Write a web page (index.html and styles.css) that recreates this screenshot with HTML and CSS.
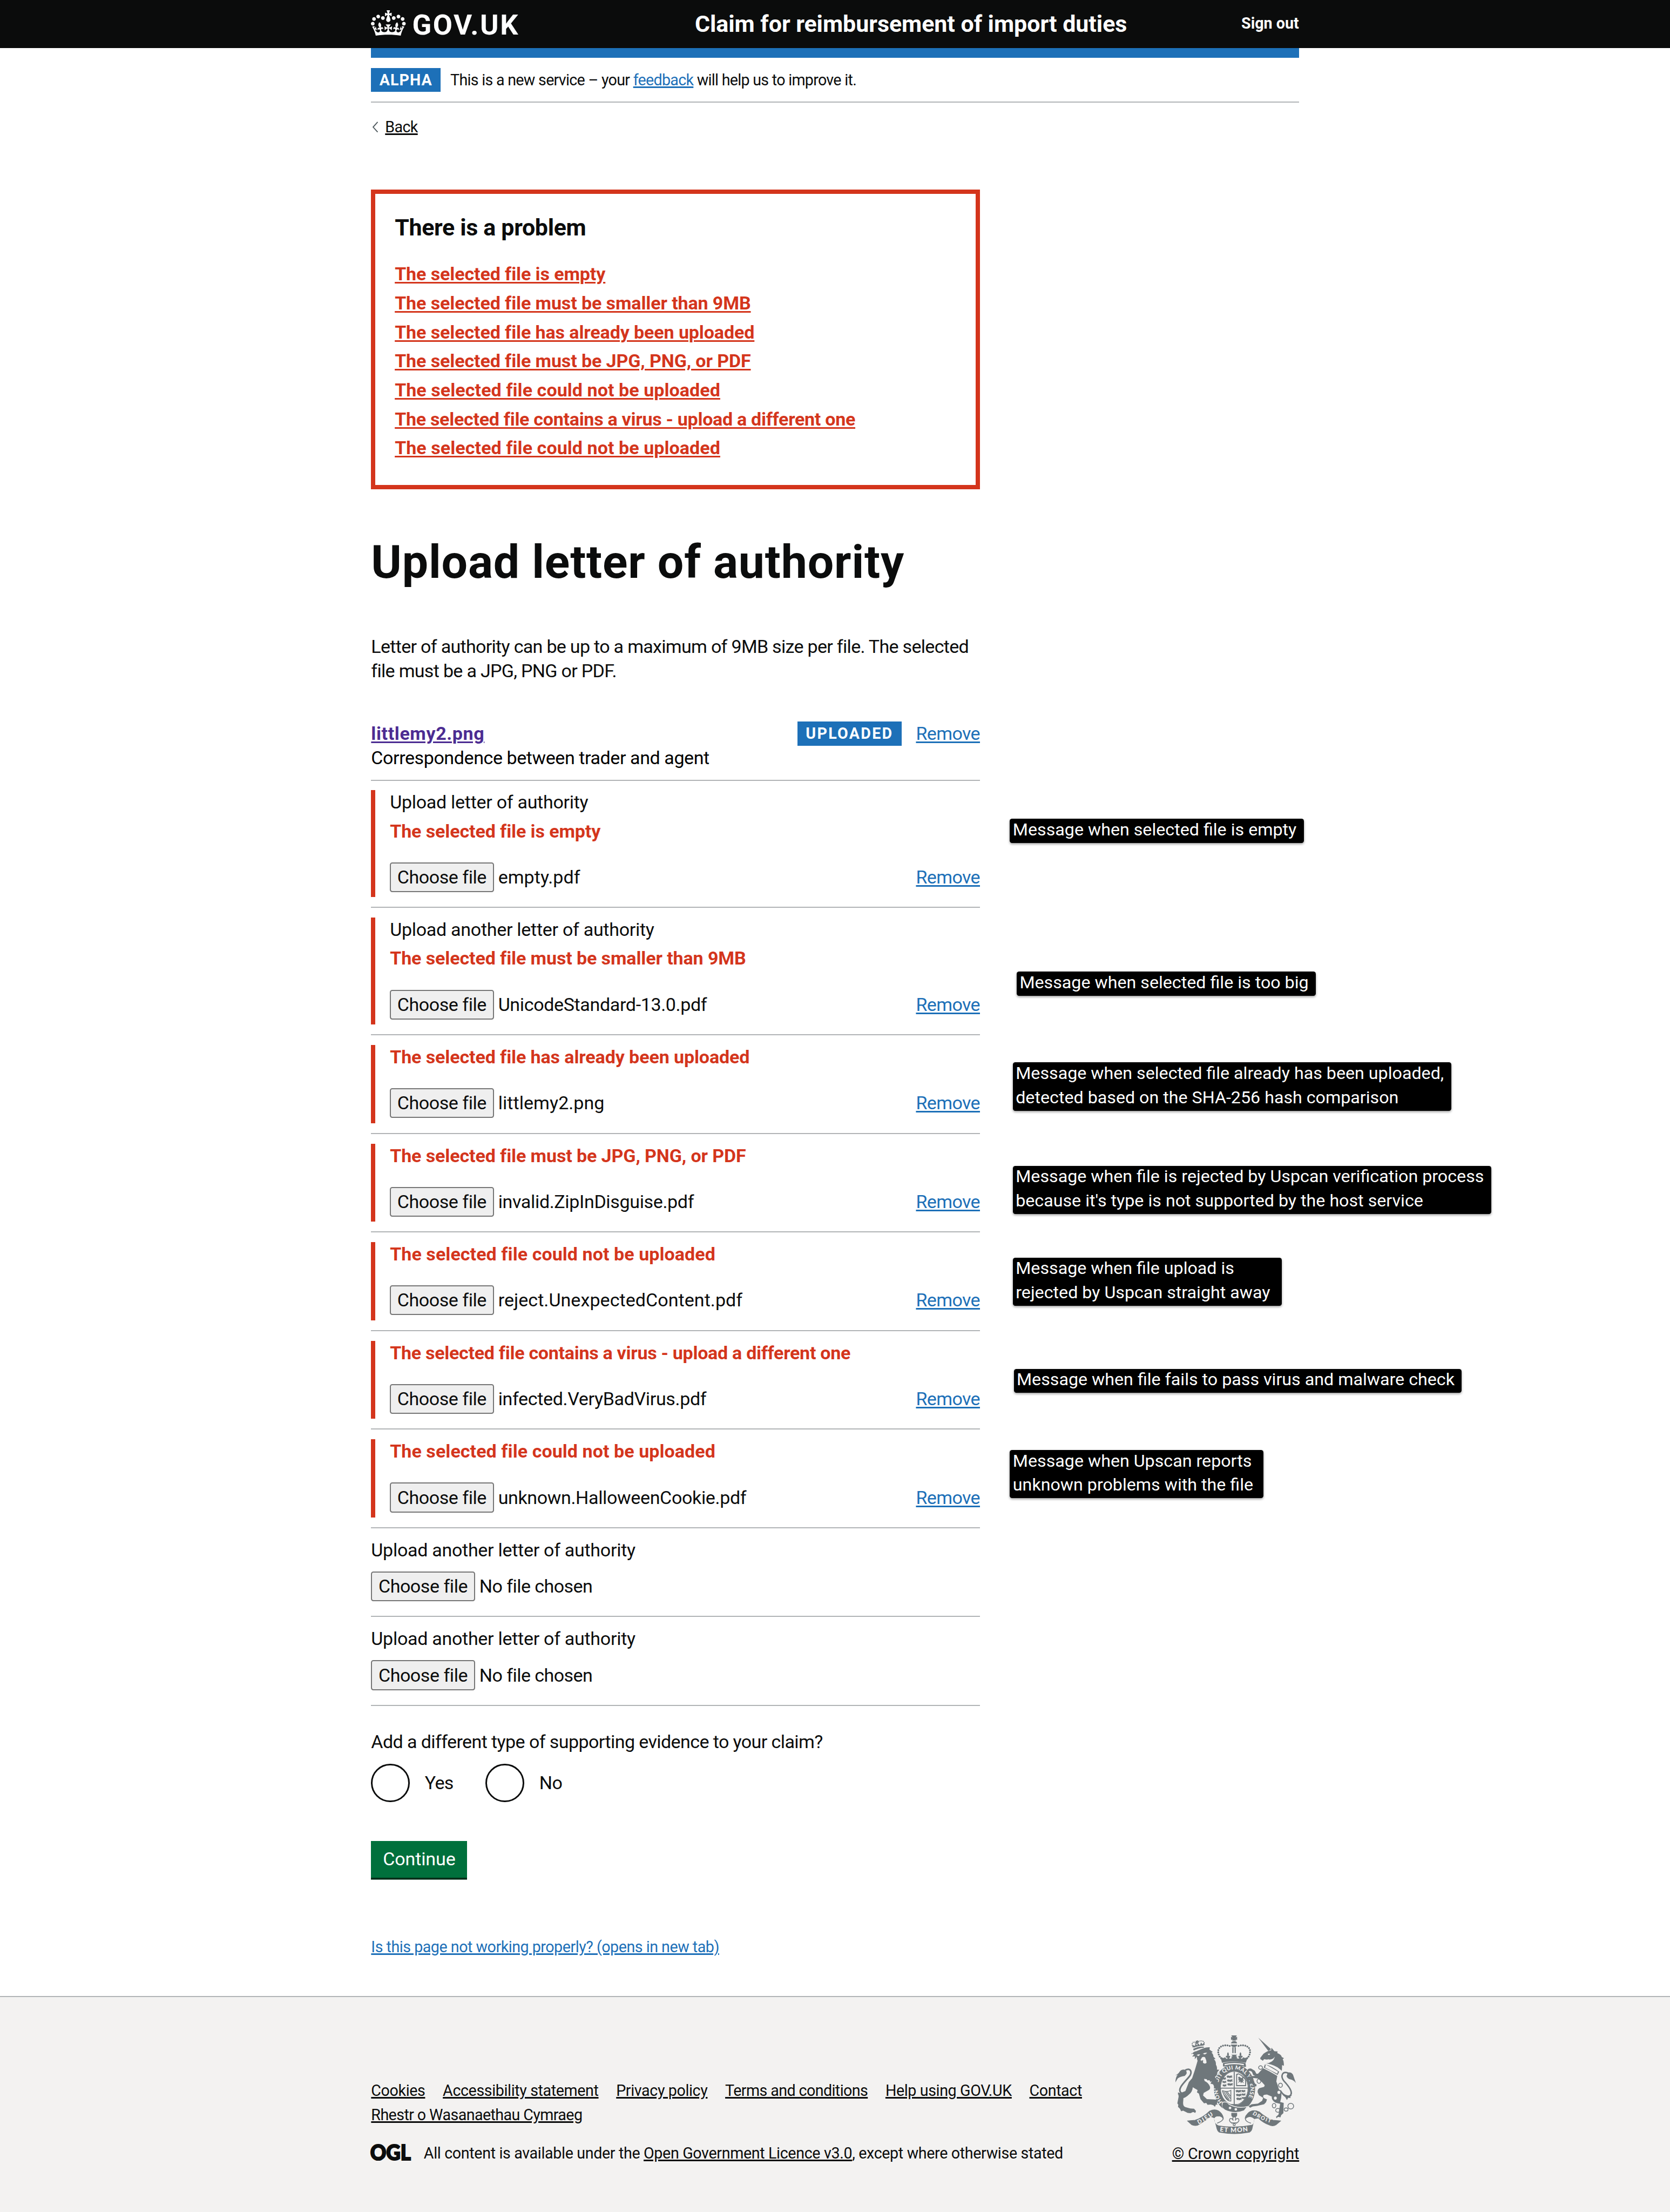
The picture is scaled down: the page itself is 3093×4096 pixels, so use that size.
FILE: index.html
```
<!DOCTYPE html>
<html lang="en">
<head>
<meta charset="utf-8">
<title>Upload letter of authority - Claim for reimbursement of import duties - GOV.UK</title>
<link rel="stylesheet" href="styles.css">
</head>
<body>
<header class="header">
  <div class="container header-row">
    <a class="logo">
      <svg class="logo-crown" viewBox="0 0 132 97" preserveAspectRatio="none" fill="currentColor"><path fill-rule="evenodd" d="M25 30.2c3.5 1.5 7.7-.2 9.1-3.7 1.5-3.6-.2-7.8-3.9-9.2-3.6-1.4-7.6.3-9.1 3.9-1.4 3.5.3 7.5 3.9 9zM9 39.5c3.6 1.5 7.8-.2 9.2-3.7 1.5-3.6-.2-7.8-3.9-9.1-3.6-1.5-7.6.2-9.1 3.8-1.4 3.5.3 7.5 3.8 9zM4.4 57.2c3.5 1.5 7.7-.2 9.1-3.8 1.5-3.6-.2-7.7-3.9-9.1-3.5-1.5-7.6.3-9.1 3.8-1.4 3.5.3 7.6 3.9 9.1zm38.3-21.4c3.5 1.5 7.7-.2 9.1-3.8 1.5-3.6-.2-7.7-3.9-9.1-3.6-1.5-7.6.3-9.1 3.8-1.3 3.6.4 7.7 3.9 9.1zm64.4-5.6c-3.6 1.5-7.8-.2-9.1-3.7-1.5-3.6.2-7.8 3.8-9.2 3.6-1.4 7.7.3 9.2 3.9 1.3 3.5-.4 7.5-3.9 9zm15.9 9.3c-3.6 1.5-7.7-.2-9.1-3.7-1.5-3.6.2-7.8 3.7-9.1 3.6-1.5 7.7.2 9.2 3.8 1.5 3.5-.3 7.5-3.8 9zm4.7 17.7c-3.6 1.5-7.8-.2-9.2-3.8-1.5-3.6.2-7.7 3.9-9.1 3.6-1.5 7.7.3 9.2 3.8 1.3 3.5-.4 7.6-3.9 9.1zM89.3 35.8c-3.6 1.5-7.8-.2-9.2-3.8-1.4-3.6.2-7.7 3.9-9.1 3.6-1.5 7.7.3 9.2 3.8 1.4 3.6-.3 7.7-3.9 9.1zM69.7 17.7l8.9 4.7V9.3l-8.9 2.8c-.2-.3-.5-.6-.9-.9L72.4 0H59.6l3.5 11.2c-.3.3-.6.5-.9.9l-8.8-2.8v13.1l8.8-4.7c.3.3.6.7.9.9l-5 15.4v.1c-.2.8-.4 1.6-.4 2.4 0 4.1 3.1 7.5 7 8.1h.2c.3 0 .7.1 1 .1.4 0 .7 0 1-.1h.2c4-.6 7.1-4.1 7.1-8.1 0-.8-.1-1.7-.4-2.4V34l-5.1-15.4c.4-.2.7-.6 1-.9zM66 92.8c16.9 0 32.8 1.1 47.1 3.2 4-16.9 8.9-26.7 14-33.5l-9.6-3.4c1 4.9 1.1 7.2 0 10.2-1.5-1.4-3-4.3-4.2-8.7L108.6 76c2.8-2 5-3.2 7.5-3.3-4.4 9.4-10 11.9-13.6 11.2-4.3-.8-6.3-4.6-5.6-7.9 1-4.7 5.7-5.9 8-.5 4.3-8.7-3-11.4-7.6-8.8 7.1-7.2 7.9-13.5 2.1-21.1-8 6.1-8.1 12.3-4.5 20.8-4.7-5.4-12.1-2.5-9.5 6.2 3.4-5.2 7.9-2 7.2 3.1-.6 4.3-6.4 7.8-13.5 7.2-10.3-.9-10.9-8-11.2-13.8 2.5-.5 7.1 1.8 11 7.3L80.2 60c-4.1 4.4-8 5.3-12.3 5.4 1.4-4.4 8-11.6 8-11.6H55.5s6.4 7.2 7.9 11.6c-4.2-.1-8-1-12.3-5.4l1.4 16.4c3.9-5.5 8.5-7.7 10.9-7.3-.3 5.8-.9 12.8-11.1 13.8-7.2.6-12.9-2.9-13.5-7.2-.7-5 3.8-8.3 7.1-3.1 2.7-8.7-4.6-11.6-9.4-6.2 3.7-8.5 3.6-14.7-4.6-20.8-5.8 7.6-5 13.9 2.2 21.1-4.7-2.6-11.9.1-7.7 8.8 2.3-5.5 7.1-4.2 8.1.5.7 3.3-1.3 7.1-5.7 7.9-3.5.7-9-1.8-13.5-11.2 2.5.1 4.7 1.3 7.5 3.3l-4.7-15.4c-1.2 4.4-2.7 7.2-4.3 8.7-1.1-3-.9-5.3 0-10.2l-9.5 3.4c5 6.9 9.9 16.7 14 33.5 14.8-2.1 30.8-3.2 47.7-3.2z"/></svg>
      <span class="logo-text">GOV.UK</span>
    </a>
    <a class="service-name">Claim for reimbursement of import duties</a>
    <a class="sign-out">Sign out</a>
  </div>
</header>

<div class="container">
  <div class="header-bar"></div>
  <div class="phase-banner">
    <strong class="tag tag-phase">ALPHA</strong>
    <span class="phase-text">This is a new service – your <a class="link">feedback</a> will help us to improve it.</span>
  </div>
  <div class="back">
    <svg class="back-arrow" viewBox="0 0 12 22" fill="none" stroke="#505a5f" stroke-width="2"><path d="M11 1L2 11l9 10"/></svg>
    <a class="link link-text">Back</a>
  </div>

  <main class="main">
    <section class="error-summary">
      <h2 class="error-title">There is a problem</h2>
      <ul class="error-list">
        <li><a class="link">The selected file is empty</a></li>
        <li><a class="link">The selected file must be smaller than 9MB</a></li>
        <li><a class="link">The selected file has already been uploaded</a></li>
        <li><a class="link">The selected file must be JPG, PNG, or PDF</a></li>
        <li class="loose"><a class="link">The selected file could not be uploaded</a></li>
        <li class="tight"><a class="link">The selected file contains a virus - upload a different one</a></li>
        <li class="loose"><a class="link">The selected file could not be uploaded</a></li>
      </ul>
    </section>

    <h1 class="title">Upload letter of authority</h1>
    <p class="intro">Letter of authority can be up to a maximum of 9MB size per file. The selected<br>file must be a JPG, PNG or PDF.</p>

    <div class="uploaded">
      <div class="uploaded-row">
        <a class="link link-visited">littlemy2.png</a>
        <strong class="tag tag-uploaded">UPLOADED</strong>
        <a class="link">Remove</a>
      </div>
      <div class="doc-type">Correspondence between trader and agent</div>
    </div>

    <div class="upload upload-tall"><div class="group">
      <div class="label">Upload letter of authority</div>
      <div class="error">The selected file is empty</div>
      <div class="file-row"><span class="file-button">Choose file</span><span class="file-name loose">empty.pdf</span><a class="link">Remove</a></div>
    </div></div>
    <div class="upload upload-tall"><div class="group">
      <div class="label">Upload another letter of authority</div>
      <div class="error">The selected file must be smaller than 9MB</div>
      <div class="file-row"><span class="file-button">Choose file</span><span class="file-name">UnicodeStandard-13.0.pdf</span><a class="link">Remove</a></div>
    </div></div>
    <div class="upload"><div class="group">
      <div class="error">The selected file has already been uploaded</div>
      <div class="file-row"><span class="file-button">Choose file</span><span class="file-name loose">littlemy2.png</span><a class="link">Remove</a></div>
    </div></div>
    <div class="upload"><div class="group">
      <div class="error">The selected file must be JPG, PNG, or PDF</div>
      <div class="file-row"><span class="file-button">Choose file</span><span class="file-name">invalid.ZipInDisguise.pdf</span><a class="link">Remove</a></div>
    </div></div>
    <div class="upload"><div class="group">
      <div class="error loose">The selected file could not be uploaded</div>
      <div class="file-row"><span class="file-button">Choose file</span><span class="file-name loose">reject.UnexpectedContent.pdf</span><a class="link">Remove</a></div>
    </div></div>
    <div class="upload"><div class="group">
      <div class="error tight">The selected file contains a virus - upload a different one</div>
      <div class="file-row"><span class="file-button">Choose file</span><span class="file-name">infected.VeryBadVirus.pdf</span><a class="link">Remove</a></div>
    </div></div>
    <div class="upload"><div class="group">
      <div class="error loose">The selected file could not be uploaded</div>
      <div class="file-row"><span class="file-button">Choose file</span><span class="file-name">unknown.HalloweenCookie.pdf</span><a class="link">Remove</a></div>
    </div></div>
    <div class="upload upload-empty">
      <div class="label">Upload another letter of authority</div>
      <div class="file-row"><span class="file-button">Choose file</span><span class="file-name file-none">No file chosen</span></div>
    </div>
    <div class="upload upload-empty">
      <div class="label">Upload another letter of authority</div>
      <div class="file-row"><span class="file-button">Choose file</span><span class="file-name file-none">No file chosen</span></div>
    </div>

    <div class="question">Add a different type of supporting evidence to your claim?</div>
    <div class="radios">
      <label class="radio"><span class="radio-dot"></span>Yes</label>
      <label class="radio"><span class="radio-dot"></span>No</label>
    </div>
    <button class="continue">Continue</button>
    <div class="help"><a class="link">Is this page not working properly? (opens in new tab)</a></div>
  </main>
</div>

<div class="note note-1"><p>Message when selected file is empty</p></div>
<div class="note note-2"><p>Message when selected file is too big</p></div>
<div class="note note-3"><p>Message when selected file already has been uploaded,<br>detected based on the SHA-256 hash comparison</p></div>
<div class="note note-4"><p>Message when file is rejected by Uspcan verification process<br>because it's type is not supported by the host service</p></div>
<div class="note note-5"><p>Message when file upload is<br>rejected by Uspcan straight away</p></div>
<div class="note note-6"><p>Message when file fails to pass virus and malware check</p></div>
<div class="note note-7"><p>Message when Upscan reports<br>unknown problems with the file</p></div>

<footer class="footer">
  <div class="container footer-row">
    <div class="footer-meta">
      <ul class="footer-links">
        <li><a class="link link-text">Cookies</a></li>
        <li><a class="link link-text">Accessibility statement</a></li>
        <li><a class="link link-text">Privacy policy</a></li>
        <li class="footer-tight"><a class="link link-text">Terms and conditions</a></li>
        <li><a class="link link-text">Help using GOV.UK</a></li>
        <li><a class="link link-text">Contact</a></li>
        <li class="footer-tight"><a class="link link-text">Rhestr o Wasanaethau Cymraeg</a></li>
      </ul>
      <div class="licence">
        <svg class="ogl" viewBox="0 0 82 34" overflow="visible"><text x="-1.5" y="33" font-size="45" textLength="84" lengthAdjust="spacingAndGlyphs">OGL</text></svg>
        <span>All content is available under the <a class="link link-text">Open Government Licence v3.0</a>, except where otherwise stated</span>
      </div>
    </div>
    <div class="crest-block">
      <svg class="crest" viewBox="156 90 752 613" fill="#6f777b" stroke="none">
        <defs>
          <path id="garter" d="M450 504A102 118 0 1 1 598 496"/>
          <path id="dieu" d="M300 643Q352 616 398 582"/>
          <path id="mon" d="M432 687Q522 700 614 684"/>
          <path id="droit" d="M634 580Q690 618 758 637"/>
          <g id="lions"><path d="M0 6q10-8 18-2l14-3 6 5-7 4 8 7-12-3-8 5-3-6-9 4zM2 30q10-8 18-2l14-3 6 5-7 4 8 7-12-3-8 5-3-6-9 4zM4 54q10-8 18-2l14-3 6 5-7 4 4 7-10-3-8 5-3-6-7 4z"/></g>
        </defs>
        <!-- imperial crown -->
        <path d="M504 90h34l-7 12 9-4v20l-9-4 4 8h-28l5-8-10 4V98l9 4zM502 139q3-14 20-15 16 1 18 15zM501 147h40q-2 15-20 16-17-1-20-16z"/>
        <path d="M510 163h8v37h-8zM524 163h8v37h-8z"/>
        <g fill="none" stroke="#6f777b" stroke-width="12" stroke-linecap="round" stroke-dasharray="0 14"><path d="M494 155C460 144 416 158 423 198Q426 220 444 236"/><path d="M549 155C583 144 627 158 620 198Q617 220 599 236"/></g>
        <path d="M436 222q16 12 24 6 6-6 10 4 6 8 12-2-14-2-12-12 6-4 10 0-6-14 3-24 9 10 4 24 6-4 10 2 0 10-8 12 10 6 19-4l-6-4 10-6-8-8h36l-8 8 10 6-6 4q9 10 19 4-8-2-8-12 4-6 10-2-5-14 4-24 9 10 3 24 4-4 10 0 2 10-12 12 6 10 12 2 4-10 10-4 8 6 24-6l-14 38q-74-16-148 0z"/>
        <path d="M452 262q70-18 140 0l4 22q-10 4-14 0-60-18-120 0l-10-2z"/>
        <path d="M462 268q60-14 120 0v8q-60-14-120 0z" fill="#f3f2f1"/>
        <!-- garter and shield -->
        <path fill-rule="evenodd" d="M522 272C596 272 652 338 652 420S596 568 522 568 396 502 396 420 448 272 522 272zM522 312C474 312 436 360 436 416S474 526 522 526 610 474 610 416 570 312 522 312z"/>
        <ellipse cx="522" cy="418" rx="86" ry="104" fill="none" stroke="#6f777b" stroke-width="4"/>
        <path d="M519 316h6v204h-6zM436 415h172v6H436zM497 517h50l-25 14z"/>
        <use href="#lions" x="474" y="338"/><use href="#lions" transform="translate(446 350) scale(.7 .9)"/>
        <use href="#lions" x="530" y="428"/><use href="#lions" transform="translate(566 428) scale(.7 .9)"/>
        <path d="M534 330l14-4q30 14 48 40v40h-62zm6 7v62h50v-32q-16-22-42-35z" fill-rule="evenodd"/>
        <path d="M546 352q8-10 14 0l10 4 4-10 8 6-6 8 8 12-10-2 8 18-12-8-6 8-4-12-14 10 8-16-8-2 4-6z"/>
        <g fill="none" stroke="#6f777b" stroke-width="5"><path d="M449 434q30 10 52-2v66q-30 4-52-62zM458 442l34 50M468 440l30 42M478 440l20 28M458 458l30 38"/></g>
        <g class="crest-motto" fill="#f3f2f1" font-size="34"><text><textPath href="#garter" textLength="496">HONI SOIT QUI MAL Y PENSE</textPath></text></g>
        <path d="M448 508q22-12 40 10 56 30 116 14l-20 26q-60 24-120-4-20-12-16-46z" stroke="#f3f2f1" stroke-width="5"/>
        <circle cx="468" cy="528" r="17" fill="none" stroke="#6f777b" stroke-width="7"/><circle cx="496" cy="541" r="8" fill="#f3f2f1"/><circle cx="532" cy="550" r="8" fill="#f3f2f1"/>
        <!-- lion -->
        <g><path d="M258 148l12 18q20-10 62-13l6-22-14 14-8-12-8 18-12-14-4 16-12-14-2 16z"/><path d="M282 124l16-4-2 10 8 2-10 6-2 8-8-6-8-2 8-6z"/>
        <g fill="none" stroke="#6f777b" stroke-width="7" stroke-linecap="round" stroke-dasharray="0 10"><path d="M264 160C252 130 272 128 286 134M300 128C320 118 342 126 334 150"/></g>
        <path d="M266 174q30-16 66-14l2 6q-34 2-64 18z"/>
        <path d="M256 208q12-18 30-20l42-18q22-8 42-6l-2 14 20 14q-4 4-8 4 14 12 12 26l14 14-10 2q14 14 12 34 10 14 6 30l16 2q-16 12-14 28-4 10-14 16 6 12 16 24l12 30 12 22-10 4-6-12 2 18-8-2-4-10-4 10-8-12 6-10-12-2-8-14-16-4 8-14-10 2-4-10-12 2-6-8-16-2 4 14q20 10 28 24 12 20 0 30l-34 20-4 16 24 22 40 2 18 2 10 10-6 12 4 10-10-2-6 14-10-10-16-4-20 2-8-12-14 2-22-26-10-34-12-8 4-14-30-18q-2 28-24 46-18 18-34 22l-2 26q-2 24 14 30l30 8 24 2 12 14-4 12-14-6-16 8-18-2-28-14-12 4-8-16-12-12 2-12-6-10 8-42q-4-20 8-20l34-14 22-56 20-24 18-54 16-54q-6-14-4-26l-14 16 2-18-18 2 12-14-16-8z"/>
        <path fill="#f3f2f1" d="M288 212q12-6 22-4l-10 10zM326 204q14-8 28-6l-14 10zM322 226q10-6 18 0 10 18 10 34-10 10-22 0-2-8 2-14l-10-2-2 6-6-8z"/>
        <g fill="none" stroke="#6f777b" stroke-width="10"><path d="M218 306C250 288 264 318 242 346 216 378 168 420 188 444 200 458 220 452 236 440L254 412"/></g><path d="M218 304q18 20-4 38-28 4-44 16l-14 24q0-30 14-48-10 4-14 4 18-8 26-22 12-18 36-12zM172 444q20 8 42 4 20-4 24-14l-16 26-18 14-4-8-24 6 8-10-12-4z"/></g>
        <!-- unicorn -->
        <path d="M672 104l80 72-18 10z"/>
        <path d="M684 230l20-26q12-10 30-18l18-4 2-16 18 22 20 2-2 10q26 10 28 24l14 8-8 6q10 20 6 42l-10-6q0 20-2 36l-14-12q-20-20-84-36l4-12 18-12-18 2-16-2-8 10-10-8q-6 0-6-10z"/>
        <path d="M730 206q10-6 16 0l-8 6zM706 238q6 10 22 4 40-2 46-20-4 36-54 42z" fill="#f3f2f1"/>
        <path d="M714 268q50 18 88 48l-10 20q-40-26-86-46zl4 8-4 14 76 38 4-14z" fill-rule="evenodd"/>
        <path d="M702 294q42 20 88 48l-6 34q10 24 16 48 18 12 16 34 0 24-8 46l22 6-2 64-14 12-4 14-16-4-8 10-4-10 16-14 6-42 4-24-30-8q-26-18-22-38l-30-12q-20 0-24 8 0 12 10 16l14 6-6 18-12 12-44 10-26 4-18 8-8-10 18-12 40-4 26-18 6-18-26-16-8-18q-2-18 10-26l30-8 4-10-18-20-24-22-16-2-16-2 2 16 12 20 10 6-4 12-12-4-26-26-8-24-6 6-6-6q6-10 16-10l36-2-12-6-8-20-12-6-12 4-4-8q4-12 24-10l22 14 10 18h10z"/>
        <g fill="none" stroke="#6f777b" stroke-width="9"><path d="M858 324C820 310 808 344 832 374 860 404 892 444 870 464 856 476 838 472 826 456L808 432"/></g><path d="M852 322q24-8 36 12l8 24 10 28q-14-18-34-22-22-6-24-22 6-8 4-20zM826 448q20 22 56 14l-12 10 4 8-16-2-8 14-8-14z"/>
        <g fill="none" stroke="#6f777b" stroke-width="5"><ellipse cx="686" cy="290" rx="12" ry="11"/><ellipse cx="676" cy="374" rx="12" ry="14"/><ellipse cx="810" cy="400" rx="12" ry="13"/><ellipse cx="770" cy="527" rx="11" ry="14"/><ellipse cx="794" cy="556" rx="14" ry="12"/><ellipse cx="845" cy="551" rx="12" ry="10"/><circle cx="874" cy="530" r="18"/></g>
        <g fill="#f3f2f1"><ellipse cx="800" cy="444" rx="9" ry="10"/><ellipse cx="778" cy="480" rx="9" ry="10"/><ellipse cx="668" cy="316" rx="8" ry="9"/></g>
        <!-- motto scroll -->
        <path d="M232 622l46-4q50-16 92-58 44-20 72 16 12 18 12 30-8-14-26-16-22 0-30 12l-24-8q-32 26-66 46-22 18-50 6z" stroke="#6f777b" stroke-width="4"/>
        <path d="M810 622l-46-4q-44-14-86-52-44-20-72 10-14 14-16 28 8-8 22-10 22 0 36 14l24-4q32 30 66 42 24 12 44 0z" stroke="#6f777b" stroke-width="4"/>
        <path d="M396 604q2 36 28 46 98 18 210-4 12-10 14-38l-14 66q-4 14-16 20-96 18-190 0-12-8-16-26zM504 572h36v16q-2 10-18 12-16-2-18-12z"/>
        <path d="M398 600q2-8 18-10 40 2 36 22-8 14-36 24M646 604q-2-8-18-10-38 2-36 20 6 14 34 22M522 588q14 14 6 32 6-16 20-12 10 16-10 26h-32q-20-10-10-26 14-4 20 12-8-18 6-32M504 636h36M522 636q-14 12 0 16 14-4 0-16" fill="none" stroke="#6f777b" stroke-width="5"/>
        <g class="crest-motto" fill="#f3f2f1" font-size="36"><text><textPath href="#dieu" textLength="108">DIEU</textPath></text><text font-size="40"><textPath href="#mon" textLength="176">ET MON</textPath></text><text font-size="33"><textPath href="#droit" textLength="126">DROIT</textPath></text></g>
      </svg>
      <a class="link link-text crown-copyright">© Crown copyright</a>
    </div>
  </div>
</footer>
</body>
</html>
```
FILE: styles.css
```
:root {
  --text: #0b0c0c;
  --blue: #1d70b8;
  --red: #d4351c;
  --line: #b1b4b6;
}
* { box-sizing: border-box; margin: 0; padding: 0; }
html { font-size: 8.9497px; }
body {
  position: relative;
  height: 4096px;
  overflow: hidden;
  display: flex;
  flex-direction: column;
  background: #fff;
  color: var(--text);
  font-family: Roboto, "Liberation Sans", sans-serif;
  font-size: 3.8rem;
  line-height: 5rem;
  letter-spacing: -0.018em;
}
ul { list-style: none; }
svg { display: block; flex: none; }
.container { width: 192rem; margin: 0 auto; }

.link {
  color: var(--blue);
  text-decoration: underline;
  text-decoration-thickness: 2.6px;
  text-underline-offset: 0.08em;
}
.link-text { color: var(--text); }
.link-visited { color: #4c2c92; }

/* header */
.header { height: 10rem; background: var(--text); color: #fff; font-weight: 700; }
.header-row { display: flex; align-items: flex-start; letter-spacing: 0; }
.logo { display: flex; width: 67rem; }
.logo-crown { width: 7.2rem; height: 5.3rem; margin-top: 2.1rem; }
.logo-text {
  margin: 2.2rem 0 0 1.3rem;
  font-size: 5.86rem;
  line-height: 6rem;
  letter-spacing: 0.05em;
}
.service-name {
  margin-top: 2.05rem;
  font-size: 4.8rem;
  line-height: 6rem;
  letter-spacing: -0.001em;
}
.sign-out {
  margin: 2.9rem 0 0 auto;
  font-size: 3.2rem;
  line-height: 4rem;
  letter-spacing: 0;
}
.header-bar { height: 2rem; background: var(--blue); }

.phase-banner {
  display: flex;
  gap: 2rem;
  padding: 2.05rem 0 2rem;
  border-bottom: 2px solid var(--line);
  font-size: 3.2rem;
  letter-spacing: -0.0245em;
}
.tag { background: var(--blue); color: #fff; font-size: 3.2rem; text-align: center; }
.tag-phase { width: 14.4rem; letter-spacing: 0.036em; }
.tag-uploaded { width: 21.5rem; letter-spacing: 0.08em; margin-left: auto; margin-right: 3rem; }

.back { display: flex; align-items: center; gap: 1.4rem; margin-top: 2.5rem; font-size: 3.2rem; }
.back-arrow { width: 1.3rem; height: 2.3rem; margin-left: 0.2rem; }

.main { width: 126rem; margin-top: 10.5rem; }

/* error summary */
.error-summary { height: 62rem; padding: 4rem; border: 1rem solid var(--red); }
.error-title { font-size: 4.8rem; line-height: 6rem; letter-spacing: -0.0075em; }
.error-list {
  display: flex;
  flex-direction: column;
  gap: 1rem;
  margin-top: 4.05rem;
  font-weight: 700;
  letter-spacing: -0.003em;
}
.error-list .link { color: var(--red); }

.title { margin-top: 10.05rem; font-size: 9.6rem; line-height: 10rem; letter-spacing: 0.0101em; }
.intro { margin-top: 10rem; letter-spacing: -0.0203em; white-space: nowrap; }

/* uploaded file */
.uploaded { height: 12.2rem; margin-top: 8rem; border-bottom: 2px solid var(--line); }
.uploaded-row { display: flex; }
.uploaded-row .link-visited { font-weight: 700; letter-spacing: 0.018em; }
.doc-type { letter-spacing: -0.012em; color: #000; }

/* upload rows */
.upload { height: 20.4rem; padding: 2rem 0; border-bottom: 2px solid var(--line); }
.upload-tall { height: 26.35rem; }
.upload-empty { height: 18.37rem; }
.group { height: 100%; padding-left: 3rem; border-left: 1rem solid var(--red); }
.label { letter-spacing: -0.0083em; }
.label + .error { margin-top: 0.95rem; }
.error { color: var(--red); font-weight: 700; letter-spacing: -0.003em; }
.file-row { display: flex; align-items: center; margin-top: 3.95rem; height: 6.17rem; }
.upload-empty .file-row { margin-top: 1.95rem; }
.file-button {
  display: flex;
  align-items: center;
  justify-content: center;
  width: 21.5rem;
  height: 6.17rem;
  border: 2px solid #767676;
  border-radius: 0.5rem;
  background: #efefef;
  letter-spacing: -0.013em;
}
.file-name { margin-left: 0.9rem; letter-spacing: -0.01em; }
.file-none { letter-spacing: -0.016em; }
.file-row .link { margin-left: auto; }

/* tracking for individual messages */
.loose { letter-spacing: 0.002em; }
.tight { letter-spacing: -0.0082em; }

/* question */
.question { margin-top: 4.95rem; letter-spacing: -0.0173em; }
.radios { display: flex; margin-top: 2rem; }
.radio { display: flex; align-items: center; gap: 3.1rem; width: 23.7rem; }
.radio-dot { width: 8rem; height: 8rem; border: 3.6px solid var(--text); border-radius: 50%; }
.continue {
  display: block;
  width: 19.9rem;
  height: 7.6rem;
  margin-top: 8rem;
  border: 0;
  background: #00703c;
  box-shadow: 0 0.4rem 0 #002d18;
  color: #fff;
  font: inherit;
  letter-spacing: -0.003em;
}
.help { margin-top: 11.85rem; font-size: 3.2rem; letter-spacing: -0.0165em; }

/* annotations */
.note {
  position: absolute;
  display: flow-root;
  height: 5rem;
  padding-left: 0.6rem;
  border-radius: 0.5rem;
  background: #000;
  box-shadow: 0 2px 4px rgba(0, 0, 0, 0.4);
  color: #fff;
  font-size: 3.6rem;
  line-height: 5rem;
  letter-spacing: 0;
  white-space: nowrap;
}
.note p { margin-top: -0.25rem; }
.note-1 { left: 209rem; top: 169.4rem; width: 60.8rem; }
.note-2 { left: 210.4rem; top: 201rem; width: 61.9rem; }
.note-3 { left: 209.6rem; top: 219.8rem; width: 90.7rem; height: 10rem; }
.note-4 { left: 209.6rem; top: 241.2rem; width: 99rem; height: 10rem; }
.note-5 { left: 209.6rem; top: 260.2rem; width: 55.7rem; height: 10rem; }
.note-6 { left: 209.8rem; top: 283.2rem; width: 92.7rem; }
.note-7 { left: 209rem; top: 300rem; width: 52.5rem; height: 10rem; }

/* footer */
.footer {
  flex: 1;
  margin-top: 7.6rem;
  padding-top: 8rem;
  border-top: 2px solid var(--line);
  background: #f3f2f1;
  font-size: 3.2rem;
  letter-spacing: -0.013em;
}
.footer-row { display: flex; justify-content: space-between; }
.footer-meta { padding-top: 8.9rem; }
.footer-links { display: flex; flex-wrap: wrap; column-gap: 3.65rem; width: 155rem; }
.footer-tight { letter-spacing: -0.02em; }
.licence { display: flex; gap: 2.7rem; margin-top: 3rem; white-space: nowrap; letter-spacing: -0.0118em; }
.ogl { width: 8.2rem; height: 3.4rem; margin-top: 0.5rem; fill: var(--text); stroke: var(--text); stroke-width: 2.4; font-family: Lato, sans-serif; font-weight: 900; letter-spacing: 0; }
.crest-block { display: flex; flex-direction: column; align-items: center; width: 26.2rem; white-space: nowrap; }
.crest { width: 25rem; height: 20.4rem; margin-bottom: 1.6rem; }
.crest-motto { font-family: Lato, sans-serif; font-weight: 900; letter-spacing: 0; }
.crown-copyright { letter-spacing: -0.003em; }
```
